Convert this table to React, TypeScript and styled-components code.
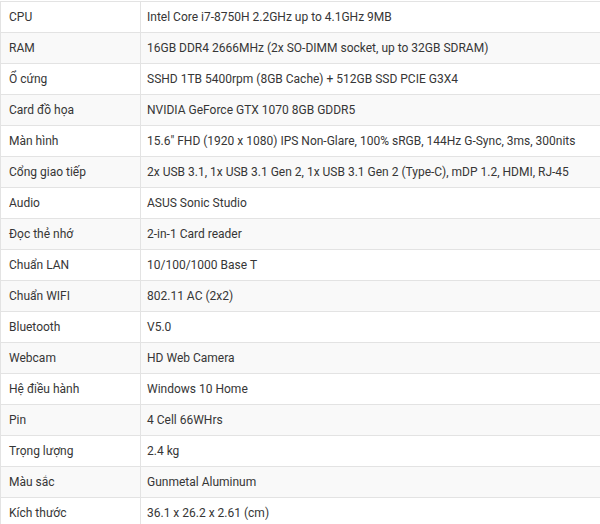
import React from "react";
import styled, { createGlobalStyle } from "styled-components";

const GlobalStyle = createGlobalStyle`
  html, body {
    margin: 0;
    padding: 0;
    background: #ffffff;
  }
  body {
    font-family: Roboto, "Liberation Sans", Arial, sans-serif;
    overflow: hidden;
  }
`;

const SpecTable = styled.table`
  width: 620px;
  border-collapse: collapse;
  margin-top: 1px;
  font-family: Roboto, "Liberation Sans", Arial, sans-serif;
  font-size: 12px;
  color: #363636;
  table-layout: fixed;
`;

const Row = styled.tr<{ $striped: boolean }>`
  background: ${(p) => (p.$striped ? "#f9f9f9" : "#ffffff")};
`;

const Cell = styled.td<{ $label?: boolean }>`
  border: 1px solid #e3e3e3;
  height: 30px;
  padding: 0 8px 0 ${(p) => (p.$label ? "8px" : "6px")};
  line-height: 30px;
  white-space: nowrap;
  vertical-align: middle;
  width: ${(p) => (p.$label ? "123px" : "auto")};
`;

const specs: [string, string][] = [
  ["CPU", "Intel Core i7-8750H 2.2GHz up to 4.1GHz 9MB"],
  ["RAM", "16GB DDR4 2666MHz (2x SO-DIMM socket, up to 32GB SDRAM)"],
  ["Ổ cứng", "SSHD 1TB 5400rpm (8GB Cache) + 512GB SSD PCIE G3X4"],
  ["Card đồ họa", "NVIDIA GeForce GTX 1070 8GB GDDR5"],
  ["Màn hình", "15.6\u2033 FHD (1920 x 1080) IPS Non-Glare, 100% sRGB, 144Hz G-Sync, 3ms, 300nits"],
  ["Cổng giao tiếp", "2x USB 3.1, 1x USB 3.1 Gen 2, 1x USB 3.1 Gen 2 (Type-C), mDP 1.2, HDMI, RJ-45"],
  ["Audio", "ASUS Sonic Studio"],
  ["Đọc thẻ nhớ", "2-in-1 Card reader"],
  ["Chuẩn LAN", "10/100/1000 Base T"],
  ["Chuẩn WIFI", "802.11 AC (2x2)"],
  ["Bluetooth", "V5.0"],
  ["Webcam", "HD Web Camera"],
  ["Hệ điều hành", "Windows 10 Home"],
  ["Pin", "4 Cell 66WHrs"],
  ["Trọng lượng", "2.4 kg"],
  ["Màu sắc", "Gunmetal Aluminum"],
  ["Kích thước", "36.1 x 26.2 x 2.61 (cm)"],
];

export default function App() {
  return (
    <>
      <GlobalStyle />
      <SpecTable>
        <tbody>
          {specs.map(([label, value], i) => (
            <Row key={label} $striped={i % 2 === 1}>
              <Cell $label>{label}</Cell>
              <Cell>{value}</Cell>
            </Row>
          ))}
        </tbody>
      </SpecTable>
    </>
  );
}
